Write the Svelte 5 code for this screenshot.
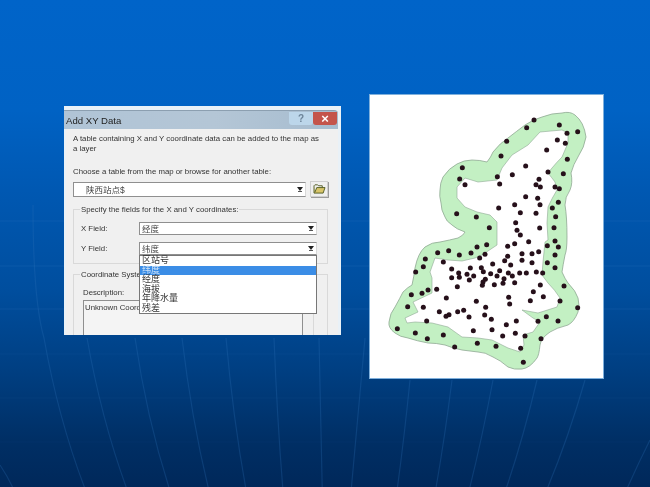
<script>
  const fans = [
    "M33 205Q33 300 44 338Q62 440 100 525", "M87 338Q105 440 141 525", "M135 338Q150 440 182 525",
    "M182 338Q194 440 218 525", "M226 338Q235 440 253 525", "M274 338Q278 440 286 525",
    "M319 338Q321 440 323 525", "M365 338Q356 440 348 525", "M410 380Q402 460 392 525",
    "M452 380Q442 460 429 525", "M493 380Q478 460 460 525", "M537 380Q518 460 493 525",
    "M585 380Q562 460 531 525", "M650 440Q635 470 622 500", "M0 465Q10 480 16 495"
  ];
  const bands = [
    [221, 0.16], [266, 0.18], [309, 0.16], [354, 0.06], [398, 0.06], [442, 0.05]
  ];

  const outer = "M562 113Q570 111 575 115Q584 122 586 137Q584 148 579 155Q573 165 571 173Q573 183 570 190Q565 197 565 205Q567 217 567 237Q567 250 565 255Q563 265 562 272Q565 279 568 283Q576 291 578 298Q580 306 578 312Q574 322 568 325Q556 328 550 332Q541 338 540 345Q539 355 537 358Q530 368 522 369Q514 370 508 367Q500 360 493 357Q485 352 478 352Q470 351 462 350Q452 348 445 345Q436 343 428 343Q417 341 408 338Q400 337 395 333Q388 328 389 322Q390 313 395 307Q400 298 403 292Q408 287 412 285Q414 276 415 268Q418 253 425 247Q432 242 440 242Q450 240 458 238Q464 235 465 232Q456 229 452 225Q446 221 445 217Q441 210 441 203Q439 196 440 190Q440 183 443 177Q449 168 457 164Q464 160 472 160Q480 160 487 162Q491 157 493 152Q500 143 508 138Q517 131 525 125Q534 119 542 117Q552 113 562 113Z";

  const inner = "M562 130L568 133L568 143Q565 150 562 157Q556 163 552 168L548 173Q552 178 555 182L557 190Q552 198 548 207L547 223L548 240L545 242L543 262L542 275L548 283Q555 290 560 298L557 307L538 313L522 310L533 318L540 322L533 332L523 335L524 345L520 352L508 348L492 340L478 338L462 337L448 327L432 323L415 322L407 323L405 318L418 312L413 302L432 293L432 278L430 272L435 258L448 260L462 261L475 258L482 255L497 245L497 238L497 230L497 222L490 215L477 212L465 207L457 198L457 187L465 178L478 182L497 180L502 168L512 155L528 145L540 132Z";

  const top = [
    [507,90],[485,113],[583,105],[606,130],[638,125],[577,150],[601,160],[425,154],[545,180],[408,198],
    [607,208],[482,228],[292,233],[549,246],[442,254],[595,251],[397,260],[522,268],[284,267],[300,284],
    [404,282],[513,284],[526,291],[570,291],[583,296],[482,320],[518,325],[580,337],[525,344],[449,344],
    [401,354],[562,354],[466,368],[513,370],[275,371],[334,381],[572,380],[452,398],[373,413],[524,414],
    [567,413],[456,421],[466,435]
  ];
  const bottom = [
    [491,20],[570,18],[449,26],[365,29],[428,34],[336,36],[547,32],[580,36],[251,47],[218,53],
    [521,50],[501,56],[471,56],[318,54],[360,58],[283,60],[570,60],[428,64],[344,69],[181,72],
    [419,77],[471,76],[235,81],[547,83],[501,83],[383,87],[437,90],[175,95],[570,98],[349,98],
    [316,99],[260,102],[404,107],[152,111],[355,110],[281,114],[306,118],[326,123],[377,116],[430,114],
    [464,114],[484,114],[514,111],[533,114],[396,123],[442,123],[260,128],[283,127],[361,133],[417,131],
    [313,135],[354,141],[352,151],[388,149],[414,145],[449,143],[526,150],[277,155],[597,153],[215,163],
    [189,165],[505,170],[139,179],[171,175],[535,185],[431,187],[244,189],[334,199],[496,197],[585,198],
    [434,207],[128,215],[175,217],[362,217],[638,218],[223,230],[278,230],[296,226],[252,239],[243,244],
    [312,246],[359,240],[544,245],[379,253],[185,258],[454,258],[519,259],[579,258],[424,269],[97,281],
    [325,287],[381,284],[151,294],[451,295],[235,300],[413,303],[480,303],[187,311],[528,311],[337,325],
    [393,334],[269,336],[467,340],[475,382]
  ];
  const stations = [
    ...top.map(([x, y]) => [365 + x / 3, 90 + y / 3]),
    ...bottom.map(([x, y]) => [365 + x / 3, 235 + y / 3])
  ];

  const fieldItems = ["区站号", "纬度", "经度", "海拔", "年降水量", "残差"];
</script>

<div class="slide">
  <svg class="backdrop" viewBox="0 0 650 487" aria-hidden="true">
    {#each bands as [y, alpha]}
      <path d="M0 {y}H650" stroke="#3f84c8" stroke-opacity={alpha} />
    {/each}
    {#each fans as d}
      <path {d} fill="none" stroke="#2f74b8" stroke-opacity="0.26" stroke-width="1.2" />
    {/each}
  </svg>

  <div class="dialog">
    <div class="titlebar">
      <span class="title">Add XY Data</span>
      <span class="help">?</span>
      <span class="close">×</span>
    </div>
    <div class="body">
      <p class="intro">A table containing X and Y coordinate data can be added to the map as a layer</p>
      <p class="choose">Choose a table from the map or browse for another table:</p>
      <div class="table-row">
        <div class="combo table-combo">
          <span class="value">陕西站点$</span>
          <span class="arrow"></span>
        </div>
        <div class="browse">
          <svg viewBox="0 0 14 12" width="13" height="11" aria-hidden="true">
            <path d="M1 3V11H11L13 5H4L2 10" fill="#d8c56a" stroke="#4f5a20" stroke-width="1" />
            <path d="M1 3L2 2H5L6 3H10V5" fill="none" stroke="#4f5a20" stroke-width="1" />
          </svg>
        </div>
      </div>

      <fieldset class="group fields">
        <legend>Specify the fields for the X and Y coordinates:</legend>
        <div class="field">
          <label for="xf">X Field:</label>
          <div class="combo" id="xf"><span class="value">经度</span><span class="arrow"></span></div>
        </div>
        <div class="field">
          <label for="yf">Y Field:</label>
          <div class="combo" id="yf"><span class="value">纬度</span><span class="arrow"></span></div>
        </div>
      </fieldset>

      <fieldset class="group coords">
        <legend>Coordinate System of Input Coordinates</legend>
        <div class="desc-label">Description:</div>
        <div class="desc-row">
          <div class="desc-box">Unknown Coordinate System</div>
          <div class="desc-side"></div>
        </div>
      </fieldset>

      <ul class="dropdown">
        {#each fieldItems as item, i}
          <li class:selected={i === 1}>{item}</li>
        {/each}
      </ul>
    </div>
  </div>

  <div class="map">
    <svg viewBox="370 95 233 283" width="233" height="283" aria-hidden="true">
      <path d={outer} fill="#c3f0c3" stroke="#8fa893" stroke-width="0.8" />
      <path d={inner} fill="#fff" stroke="#8fa893" stroke-width="0.6" />
      {#each stations as [cx, cy]}
        <circle {cx} {cy} r="2.5" fill="#26101a" />
      {/each}
    </svg>
  </div>
</div>

<style>
  :global(body) {
    margin: 0;
  }
  .slide {
    position: relative;
    width: 650px;
    height: 487px;
    overflow: hidden;
    display: flex;
    align-items: flex-start;
    padding-left: 64px;
    box-sizing: border-box;
    background: linear-gradient(180deg, #0064c9 0, #0062c4 110px, #0058b2 190px, #004e9e 290px, #003f82 370px, #002f65 440px, #00285a 487px);
    font-family: "Liberation Sans", "Noto Sans CJK SC", sans-serif;
  }
  .backdrop {
    position: absolute;
    inset: 0;
    width: 650px;
    height: 487px;
  }

  /* dialog */
  .dialog {
    position: relative;
    width: 277px;
    height: 229px;
    margin-top: 106px;
    overflow: hidden;
    box-sizing: border-box;
    padding: 4px 3px 0 2px;
    background: #e9f1f7;
    color: #333;
    font-size: 7.8px;
    filter: blur(0.45px);
  }
  .titlebar {
    display: flex;
    align-items: center;
    height: 18px;
    margin-left: -2px;
    padding-left: 2px;
    background: linear-gradient(90deg, #b0c4d6, #b4c6d6 55%, #a6bccf);
    border-top: 1px solid #8c9fb0;
    border-radius: 0 4px 0 0;
  }
  .title {
    flex: 1;
    font-size: 9.6px;
    color: #222;
  }
  .help,
  .close {
    display: flex;
    align-items: center;
    justify-content: center;
    height: 13px;
    margin-top: -3px;
    color: #fff;
    font-size: 10px;
    font-weight: 700;
    border-radius: 0 0 3px 3px;
  }
  .help {
    width: 24px;
    background: #bcd6ea;
    color: #6d8499;
  }
  .close {
    width: 24px;
    margin-right: 1px;
    background: #c4544b;
    font-size: 13px;
  }

  .body {
    position: relative;
    height: 207px;
    padding: 5px 10px 0 7px;
    background: #f0f0f0;
  }
  p {
    margin: 0;
    line-height: 9.5px;
  }
  .intro {
    width: 250px;
  }
  .choose {
    margin-top: 14px;
  }
  .table-row {
    display: flex;
    gap: 4px;
    margin-top: 5px;
  }
  .combo {
    display: flex;
    align-items: center;
    flex: 1;
    height: 13px;
    box-sizing: border-box;
    background: #fff;
    border: 1px solid #8f8f8f;
    border-right-color: #d8d8d8;
  }
  .table-combo {
    height: 15px;
  }
  .table-combo .value {
    padding-left: 12px;
  }
  .value {
    flex: 1;
    padding-left: 2px;
    font-size: 8.5px;
    color: #444;
  }
  .arrow {
    width: 0;
    height: 0;
    margin-right: 2px;
    border: 3px solid transparent;
    border-top: 4px solid #222;
    border-bottom: 0;
    box-shadow: 0 2px 0 -1px #555;
  }
  .browse {
    display: flex;
    align-items: center;
    justify-content: center;
    width: 18px;
    height: 16px;
    margin-top: -1px;
    background: #efefef;
    border: 1px solid #cfcfcf;
    box-sizing: border-box;
    box-shadow: 1px 1px 0 #9b9b9b;
  }

  .group {
    margin: 0;
    padding: 0 0 0 6px;
    border: 1px solid #d9d9d9;
    min-width: 0;
  }
  legend {
    margin: 0;
    padding: 0 1px;
    line-height: 9px;
  }
  .fields {
    height: 59px;
    margin-top: 8px;
    box-sizing: border-box;
    padding-top: 8px;
    padding-right: 10px;
  }
  .field {
    display: flex;
    align-items: center;
    margin-bottom: 7px;
  }
  label {
    width: 59px;
    padding-left: 1px;
    box-sizing: border-box;
  }
  .coords {
    height: 80px;
    margin-top: 6px;
    padding-top: 9px;
  }
  .desc-label {
    margin-left: 3px;
  }
  .desc-row {
    display: flex;
    margin: 3px 0 0 3px;
  }
  .desc-box {
    width: 220px;
    height: 60px;
    padding: 2px 1px;
    box-sizing: border-box;
    background: #f4f4f4;
    border: 1px solid #8f8f8f;
    border-bottom: 0;
    line-height: 9px;
  }
  .desc-side {
    width: 10px;
    height: 60px;
    border-right: 1px solid #d9d9d9;
  }

  .dropdown {
    position: absolute;
    left: 73px;
    top: 126px;
    width: 178px;
    height: 59px;
    margin: 0;
    padding: 0;
    box-sizing: border-box;
    list-style: none;
    background: #fff;
    border: 1px solid #777;
    font-size: 9px;
    color: #333;
  }
  li {
    height: 9.6px;
    line-height: 9.6px;
    padding-left: 2px;
  }
  .selected {
    background: #3b8de6;
    color: #cfe2f7;
  }

  /* map */
  .map {
    position: relative;
    width: 233px;
    height: 283px;
    margin: 95px 0 0 29px;
    background: #fff;
    box-shadow: 0 0 0 1px #7fb0dc;
    filter: blur(0.35px);
  }
  .map svg {
    display: block;
  }
</style>
